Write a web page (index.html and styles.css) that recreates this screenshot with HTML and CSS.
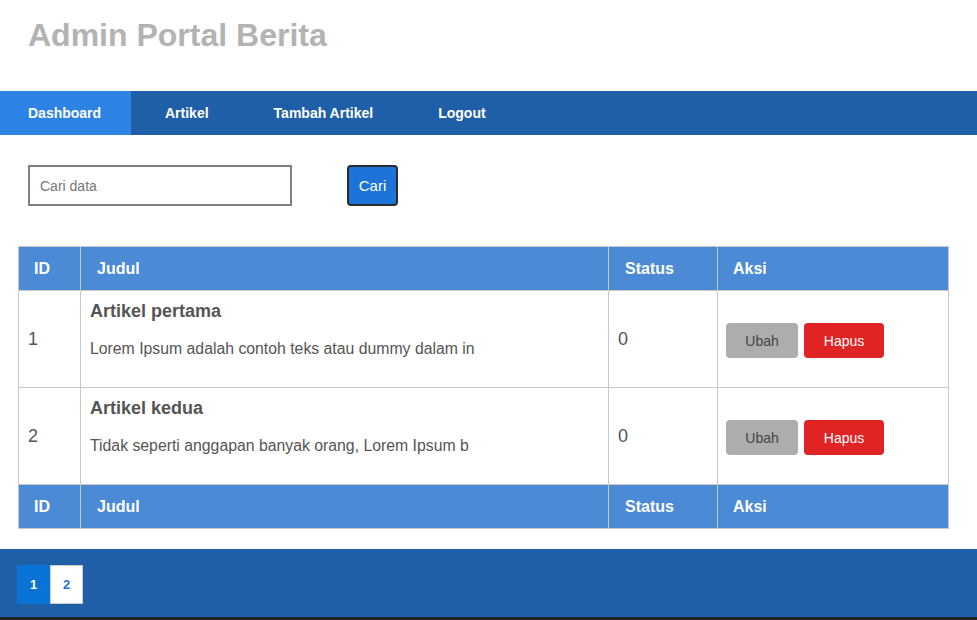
FILE: index.html
```html
<!DOCTYPE html>
<html lang="id">
<head>
<meta charset="utf-8">
<title>Admin Portal Berita</title>
<link rel="stylesheet" href="styles.css">
</head>
<body>
<header class="site-header">
  <h1 class="site-title">Admin Portal Berita</h1>
</header>
<nav class="main-nav">
  <a class="nav-item active" href="#">Dashboard</a>
  <a class="nav-item" href="#">Artikel</a>
  <a class="nav-item" href="#">Tambah Artikel</a>
  <a class="nav-item" href="#">Logout</a>
</nav>
<main class="content">
  <form class="search-form">
    <input class="search-input" type="text" placeholder="Cari data">
    <button class="search-btn" type="button">Cari</button>
  </form>
  <table class="data-table">
    <thead>
      <tr>
        <th class="col-id">ID</th>
        <th class="col-judul">Judul</th>
        <th class="col-status">Status</th>
        <th class="col-aksi">Aksi</th>
      </tr>
    </thead>
    <tbody>
      <tr>
        <td class="cell-id">1</td>
        <td class="cell-judul">
          <h3 class="art-title">Artikel pertama</h3>
          <p class="art-text">Lorem Ipsum adalah contoh teks atau dummy dalam in</p>
        </td>
        <td class="cell-status">0</td>
        <td class="cell-aksi">
          <div class="actions">
            <a class="btn btn-edit" href="#">Ubah</a>
            <a class="btn btn-delete" href="#">Hapus</a>
          </div>
        </td>
      </tr>
      <tr>
        <td class="cell-id">2</td>
        <td class="cell-judul">
          <h3 class="art-title">Artikel kedua</h3>
          <p class="art-text">Tidak seperti anggapan banyak orang, Lorem Ipsum b</p>
        </td>
        <td class="cell-status">0</td>
        <td class="cell-aksi">
          <div class="actions">
            <a class="btn btn-edit" href="#">Ubah</a>
            <a class="btn btn-delete" href="#">Hapus</a>
          </div>
        </td>
      </tr>
    </tbody>
    <tfoot>
      <tr>
        <th>ID</th>
        <th>Judul</th>
        <th>Status</th>
        <th>Aksi</th>
      </tr>
    </tfoot>
  </table>
</main>
<footer class="site-footer">
  <div class="pagination">
    <a class="page active" href="#">1</a>
    <a class="page" href="#">2</a>
  </div>
</footer>
<div class="bottom-strip"></div>
</body>
</html>
```
FILE: styles.css
```css
* { box-sizing: border-box; }
html, body { margin: 0; padding: 0; }
body {
  font-family: "Liberation Sans", Arial, sans-serif;
  background: #ffffff;
  color: #555555;
}
.site-header {
  height: 91px;
  padding: 17px 28px 0;
}
.site-title {
  margin: 0;
  font-size: 32px;
  line-height: 37px;
  font-weight: bold;
  color: #b3b3b3;
}
.main-nav {
  display: flex;
  height: 44px;
  background: #1f5fa8;
}
.nav-item {
  display: flex;
  align-items: center;
  padding: 0 32.5px;
  color: #ffffff;
  font-size: 14px;
  font-weight: bold;
  text-decoration: none;
}
.nav-item.active {
  background: #2c83e4;
  width: 131px;
  padding: 0 0 0 28px;
}
.nav-item:nth-child(2) { padding-left: 34px; }
.content {
  padding: 30px 29px 20px 18px;
}
.search-form {
  display: flex;
  align-items: center;
  gap: 55px;
  padding-left: 10px;
  margin-bottom: 40px;
}
.search-input {
  width: 264px;
  height: 41px;
  border: 2px solid #808080;
  padding: 0 10px;
  font-family: "Liberation Sans", Arial, sans-serif;
  font-size: 14px;
  color: #333;
  outline: none;
}
.search-input::placeholder { color: #777777; }
.search-btn {
  width: 51px;
  height: 41px;
  background: #1c74d9;
  color: #ffffff;
  border: 2px solid #2b2b2b;
  border-radius: 4px;
  font-family: "Liberation Sans", Arial, sans-serif;
  font-size: 15px;
  padding: 0;
}
.data-table {
  width: 931px;
  border-collapse: collapse;
  border: 1px solid #c8c8c8;
}
.data-table th {
  background: #4b8ad4;
  color: #ffffff;
  font-size: 16px;
  font-weight: bold;
  text-align: left;
  height: 44px;
  padding: 0 15px;
  border: 1px solid #c8c8c8;
}
.data-table th:nth-child(2) { padding-left: 16px; }
.data-table th:nth-child(3) { padding-left: 16px; }
.col-id { width: 62px; }
.col-status { width: 109px; }
.col-aksi { width: 231px; }
.data-table td {
  border: 1px solid #c8c8c8;
  padding: 10px 9px;
  vertical-align: middle;
  font-size: 18px;
  color: #555555;
}
.data-table td.cell-aksi { padding: 10px 8px; }
.art-title {
  margin: 0 0 18px;
  font-size: 18px;
  line-height: 21px;
  font-weight: bold;
  color: #555555;
}
.art-text {
  margin: 0 0 19px;
  font-size: 15.8px;
  line-height: 18px;
  color: #555555;
}
.actions {
  display: flex;
  gap: 6px;
  padding-top: 3px;
}
.btn {
  display: flex;
  align-items: center;
  justify-content: center;
  height: 35px;
  border-radius: 4px;
  font-size: 14px;
  text-decoration: none;
}
.btn-edit {
  width: 72px;
  background: #adadad;
  color: #444444;
}
.btn-delete {
  width: 80px;
  background: #e02424;
  color: #ffffff;
}
.site-footer {
  height: 68px;
  background: #1f5fa8;
  padding: 16px 17px 0;
}
.pagination {
  display: flex;
}
.page {
  display: flex;
  align-items: center;
  justify-content: center;
  width: 33px;
  height: 39px;
  font-size: 13px;
  font-weight: bold;
  text-decoration: none;
  background: #ffffff;
  color: #1c74d9;
  border: 1px solid #cccccc;
}
.page.active {
  background: #0a73d6;
  color: #ffffff;
  border-color: #0a73d6;
}
.bottom-strip {
  height: 3px;
  background: #222222;
}
```
